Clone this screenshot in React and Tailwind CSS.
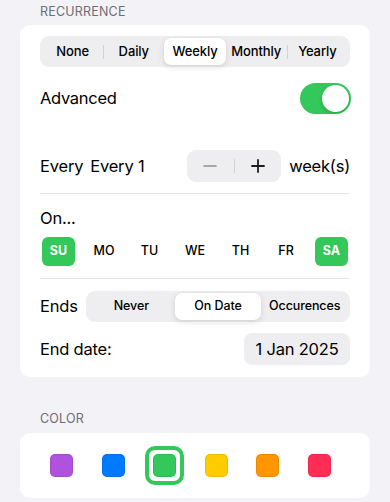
import React from "react";

const days = ["SU", "MO", "TU", "WE", "TH", "FR", "SA"];
const selectedDays = ["SU", "SA"];
const colors = ["#af52de", "#007aff", "#34c759", "#ffcc00", "#ff9500", "#ff2d55"];

function Segmented({ items, selected, textClass, dividers = true }) {
  return (
    <div className="flex h-[31px] items-stretch rounded-[9px] bg-[#eeeef0] p-[2px]">
      {items.map((it, i) => {
        const sel = i === selected;
        const showDivider =
          dividers && i > 0 && i !== selected && i - 1 !== selected;
        return (
          <div key={it} className="relative flex flex-1 items-center justify-center">
            {showDivider && (
              <div className="absolute left-0 top-[7px] h-[14px] w-px bg-[#d1d1d6]" />
            )}
            <div
              className={
                "flex h-full w-full items-center justify-center rounded-[7px] " +
                (sel ? "bg-white shadow-[0_2px_6px_rgba(0,0,0,0.12),0_0_1px_rgba(0,0,0,0.08)] " : "") +
                textClass
              }
            >
              {it}
            </div>
          </div>
        );
      })}
    </div>
  );
}

export default function App() {
  return (
    <div
      className="h-[502px] w-[390px] overflow-hidden bg-[#f2f2f7] text-black"
      style={{ fontFamily: "Inter, 'Noto Sans', sans-serif" }}
    >
      <div className="px-10 pt-[4px] text-[12.5px] leading-[16px] tracking-[0.2px] text-[#6e6e73]">
        RECURRENCE
      </div>
      <div className="mx-5 mt-[5px] rounded-[10px] bg-white px-5 pb-[12px] pt-[11px]">
        <Segmented
          items={["None", "Daily", "Weekly", "Monthly", "Yearly"]}
          selected={2}
          textClass="text-[13px] font-medium tracking-[-0.1px]"
        />
        <div className="mt-[16px] flex h-[31px] items-center justify-between">
          <span className="text-[16.5px] tracking-[-0.3px]">Advanced</span>
          <div className="relative mr-[-1px] h-[31px] w-[51px] rounded-full bg-[#34c759]">
            <div className="absolute right-[2px] top-[2px] h-[27px] w-[27px] rounded-full bg-white shadow-[0_2px_4px_rgba(0,0,0,0.15)]" />
          </div>
        </div>
        <div className="mt-[36px] flex h-[32px] items-center">
          <span className="text-[16.5px] tracking-[-0.2px]">Every</span>
          <span className="ml-[7px] text-[16.5px] tracking-[-0.2px]">Every 1</span>
          <div className="ml-auto flex h-[32px] w-[94px] items-center rounded-[9px] bg-[#eeeef0]">
            <div className="flex flex-1 items-center justify-center">
              <svg width="16" height="16" viewBox="0 0 16 16">
                <path d="M2 8h12" stroke="#8e8e93" strokeWidth="1.6" strokeLinecap="round" />
              </svg>
            </div>
            <div className="h-[14px] w-px bg-[#d1d1d6]" />
            <div className="flex flex-1 items-center justify-center">
              <svg width="16" height="16" viewBox="0 0 16 16">
                <path d="M2 8h12M8 2v12" stroke="#1c1c1e" strokeWidth="1.8" strokeLinecap="round" />
              </svg>
            </div>
          </div>
          <span className="ml-[8px] text-[16.5px] tracking-[-0.2px]">week(s)</span>
        </div>
        <div className="mt-[11px] h-px bg-[#e5e5ea]" />
        <div className="mt-[13px] text-[16.5px] leading-[22px] tracking-[-0.2px]">On...</div>
        <div className="mt-[8px] flex justify-between px-[2px]">
          {days.map((d) => {
            const sel = selectedDays.includes(d);
            return (
              <div
                key={d}
                className={
                  "flex h-[29px] w-[33px] items-center justify-center rounded-[6px] text-[12.5px] " +
                  (sel ? "bg-[#34c759] font-bold text-white" : "font-medium text-black")
                }
              >
                {d}
              </div>
            );
          })}
        </div>
        <div className="mt-[12px] h-px bg-[#e5e5ea]" />
        <div className="mt-[12px] flex items-center">
          <span className="w-[46px] text-[16.5px] tracking-[-0.2px]">Ends</span>
          <div className="flex-1">
            <Segmented
              items={["Never", "On Date", "Occurences"]}
              selected={1}
              dividers={false}
              textClass="text-[12.5px] font-medium tracking-[-0.1px]"
            />
          </div>
        </div>
        <div className="mt-[11px] flex items-center justify-between">
          <span className="text-[16.5px] tracking-[-0.2px]">End date:</span>
          <div className="flex h-[32px] w-[106px] items-center justify-center rounded-[8px] bg-[#eeeef0] text-[16.5px] tracking-[-0.2px]">
            1 Jan 2025
          </div>
        </div>
      </div>
      <div className="mt-[34px] px-10 text-[12.5px] leading-[16px] tracking-[0.2px] text-[#6e6e73]">
        COLOR
      </div>
      <div className="mx-5 mt-[6px] flex h-[65px] items-center gap-[12.6px] rounded-[10px] bg-white pl-[22px]">
        {colors.map((c, i) => (
          <div
            key={c}
            className={
              "flex h-[39px] w-[39px] items-center justify-center rounded-[10px] " +
              (i === 2 ? "border-[4px] border-[#34c759]" : "")
            }
          >
            <div
              className="h-[23px] w-[23px] rounded-[5px]"
              style={{ backgroundColor: c, boxShadow: "inset 0 0 0 1px rgba(0,0,0,0.08)" }}
            />
          </div>
        ))}
      </div>
    </div>
  );
}
